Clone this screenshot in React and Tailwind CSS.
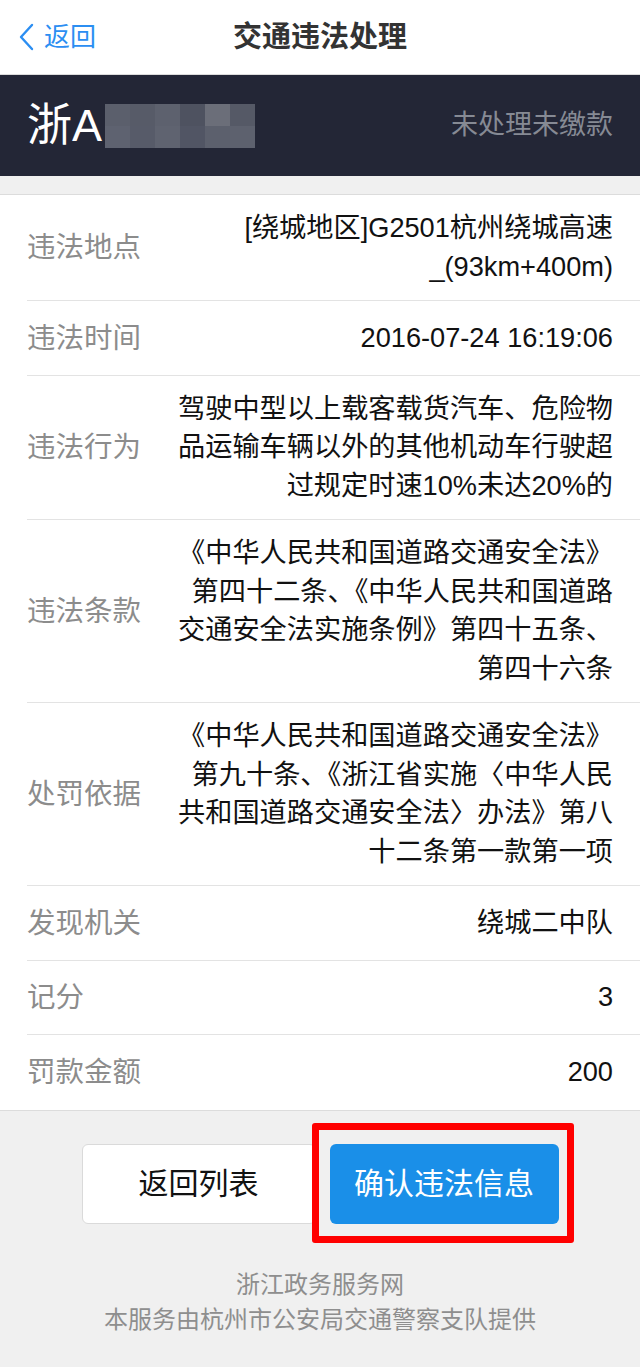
import React from "react";

const rows = [
  { label: "违法地点", lines: ["[绕城地区]G2501杭州绕城高速", "_(93km+400m)"] },
  { label: "违法时间", lines: ["2016-07-24 16:19:06"] },
  {
    label: "违法行为",
    lines: ["驾驶中型以上载客载货汽车、危险物", "品运输车辆以外的其他机动车行驶超", "过规定时速10%未达20%的"],
  },
  {
    label: "违法条款",
    lines: ["《中华人民共和国道路交通安全法》", "第四十二条、《中华人民共和国道路", "交通安全法实施条例》第四十五条、", "第四十六条"],
  },
  {
    label: "处罚依据",
    lines: ["《中华人民共和国道路交通安全法》", "第九十条、《浙江省实施〈中华人民", "共和国道路交通安全法〉办法》第八", "十二条第一款第一项"],
  },
  { label: "发现机关", lines: ["绕城二中队"] },
  { label: "记分", lines: ["3"] },
  { label: "罚款金额", lines: ["200"] },
];

// blurred plate number
const mosaic = [
  "bg-[#5b5f6c]", "bg-[#575b68]", "bg-[#5d616e]", "bg-[#4e5260]", "bg-[#6b6e79]", "bg-[#555966]",
  "bg-[#5e6270]", "bg-[#575b69]", "bg-[#5f6370]", "bg-[#515564]", "bg-[#5c606d]", "bg-[#5d616e]",
];

export default function App() {
  return (
    <div className="min-h-screen bg-[#f0f0f0] font-['Liberation_Sans','Noto_Sans_CJK_SC',sans-serif]">
      {/* Nav bar */}
      <div className="relative flex h-[75px] items-center justify-center border-b border-[#dcdcdc] bg-white">
        <div className="absolute left-[18px] top-0 flex h-full items-center gap-[10px] text-[#2b8ef2]">
          <svg width="16" height="28" viewBox="0 0 16 28" fill="none">
            <path d="M14 2 L3 14 L14 26" stroke="#2b8ef2" strokeWidth="2.4" strokeLinecap="round" strokeLinejoin="round" />
          </svg>
          <span className="text-[26px] leading-none">返回</span>
        </div>
        <h1 className="text-[29px] font-bold leading-none text-[#333]">交通违法处理</h1>
      </div>

      {/* Plate header */}
      <div className="flex h-[101px] items-center justify-between bg-[#232636] pl-[27px] pr-[27px]">
        <div className="flex items-center">
          <span className="text-[45px] leading-none text-white">浙A</span>
          <div className="ml-[3px] grid grid-cols-6">
            {mosaic.map((c, i) => (
              <div key={i} className={`h-[22px] w-[25px] ${c}`} />
            ))}
          </div>
        </div>
        <span className="text-[27px] leading-none text-[#868a94]">未处理未缴款</span>
      </div>

      {/* Details */}
      <div className="mt-[18px] border-t border-b border-[#dcdcdc] bg-white pl-[27px]">
        {rows.map((r, i) => (
          <div
            key={r.label}
            className={`flex min-h-[74.5px] items-center py-[14px] pr-[27px] ${i < rows.length - 1 ? "border-b border-[#e3e3e3]" : ""}`}
          >
            <div className="w-[151px] shrink-0 text-[28.5px] leading-[38.5px] text-[#8c8c8c]">{r.label}</div>
            <div className="flex-1 text-right text-[27.2px] leading-[38.5px] text-[#111]">
              {r.lines.map((l) => (
                <div key={l} className="whitespace-nowrap">{l}</div>
              ))}
            </div>
          </div>
        ))}
      </div>

      {/* Actions */}
      <div className="mt-[33px] flex justify-center gap-[14px]">
        <button className="flex h-[80px] w-[234px] items-center justify-center rounded-[6px] border border-[#dadada] bg-white text-[30px] text-[#111]">
          返回列表
        </button>
        <div className="relative">
          <button className="flex h-[80px] w-[229px] items-center justify-center rounded-[6px] bg-[#1a8fe8] text-[30px] text-white">
            确认违法信息
          </button>
          <div className="pointer-events-none absolute -bottom-[19px] -left-[18px] -right-[15px] -top-[21px] rounded-[3px] border-[7px] border-[#ff0000]" />
        </div>
      </div>

      {/* Footer */}
      <div className="mt-[43px] pb-[28px] text-center text-[24px] leading-[35px] text-[#8e8e8e]">
        <div>浙江政务服务网</div>
        <div>本服务由杭州市公安局交通警察支队提供</div>
      </div>
    </div>
  );
}
